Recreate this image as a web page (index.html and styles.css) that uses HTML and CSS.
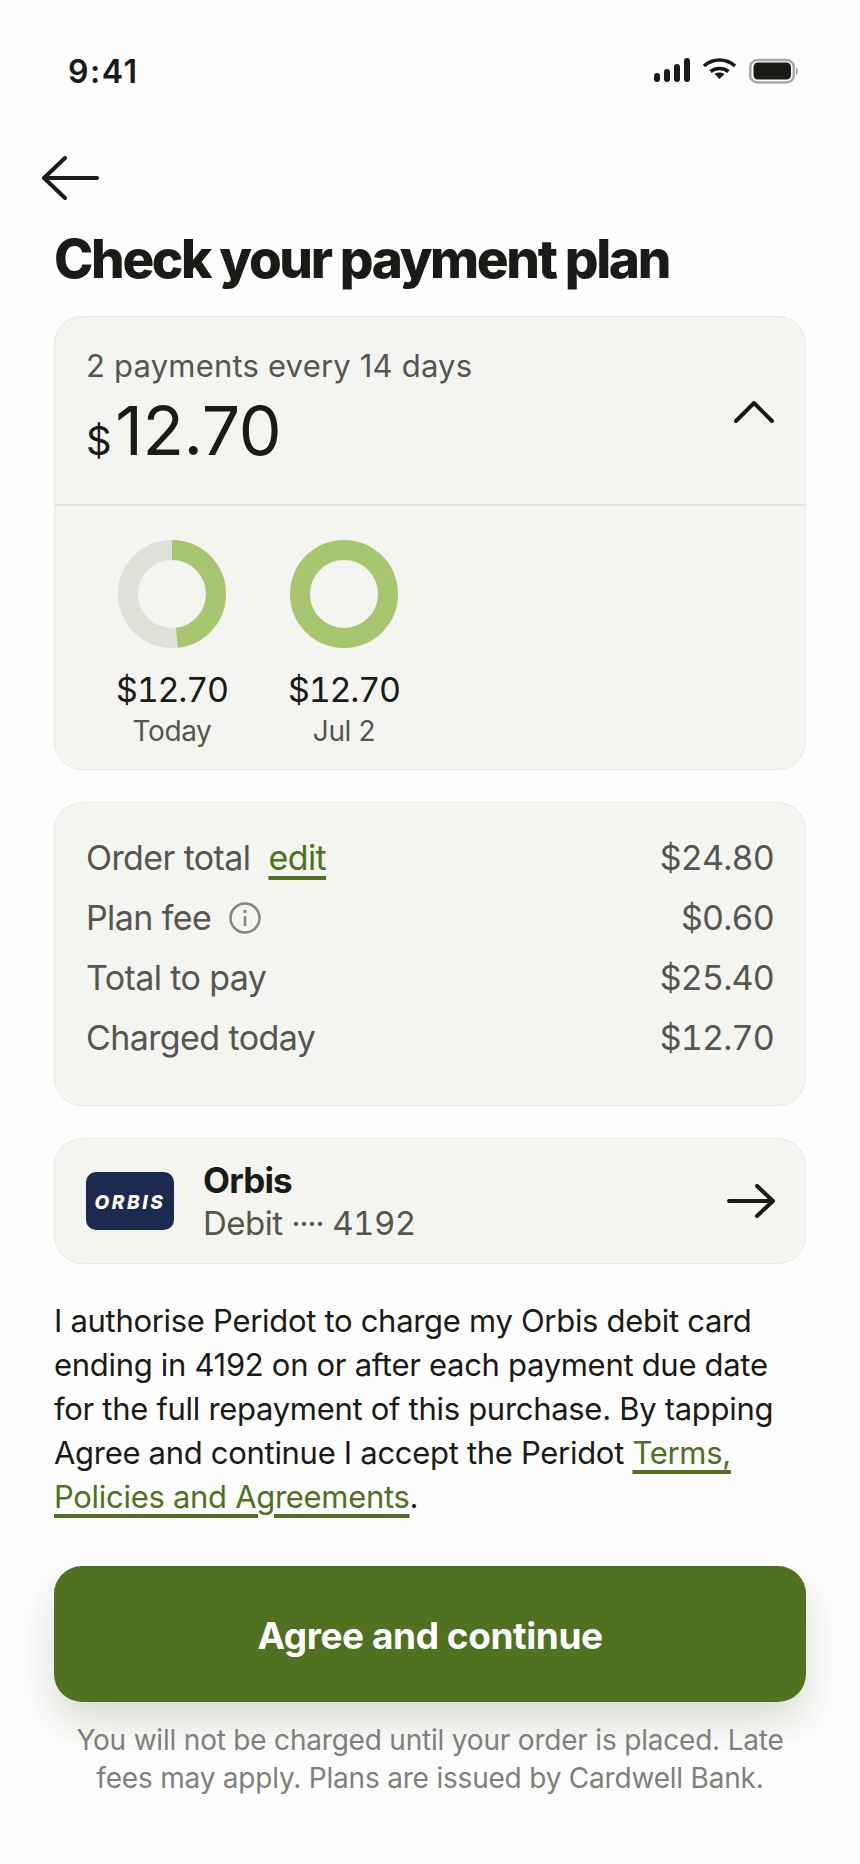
FILE: index.html
```html
<!DOCTYPE html>
<html lang="en">
<head>
    <meta charset="UTF-8">
    <meta name="viewport" content="width=device-width, initial-scale=1.0">
    <link rel="stylesheet" href="styles.css">
    <title>Check your payment plan</title>
</head>
<body>
    <div class="status-bar">
        <span class="status-bar__time">9:41</span>
        <svg class="status-bar__icons" width="146" height="28" viewBox="0 0 146 28">
            <g fill="#1a1a17">
                <rect x="0" y="16" width="6" height="9" rx="3"/>
                <rect x="10" y="12" width="6" height="13" rx="3"/>
                <rect x="20" y="7" width="6" height="18" rx="3"/>
                <rect x="30" y="1" width="6" height="24" rx="3"/>
                <path d="M60.5 17l5 5 5-5c-3-2-7-2-10 0z"/>
            </g>
            <g fill="none" stroke="#1a1a17" stroke-width="3.6">
                <path d="M50 9c9-8 22-8 31 0"/>
                <path d="M56.5 14.5c5-4 13-4 18 0"/>
            </g>
            <rect x="96.3" y="3" width="43.5" height="22.5" rx="7" fill="none" stroke="#a9a9a5" stroke-width="2.5"/>
            <rect x="99.5" y="5.500" width="37.500" height="17" rx="4.5" fill="#1a1a17"/>
            <path d="M142 10.5c2.5 1 2.5 6.5 0 7.500z" fill="#a9a9a5"/>
        </svg>
    </div>

    <main class="page">
        <svg class="back-icon" width="58" height="44" viewBox="0 0 58 44">
            <path d="M56 22H3M24 2L3 22l21 20" fill="none" stroke="#1a1a17" stroke-width="4" stroke-linecap="round" stroke-linejoin="round"/>
        </svg>

        <h1 class="title">Check your payment plan</h1>

        <section class="card">
            <div class="plan-head">
                <div>
                    <div class="plan-head__label">2 payments every 14 days</div>
                    <div class="plan-head__amount"><span class="plan-head__currency">$</span>12.70</div>
                </div>
                <svg class="plan-head__chevron" width="40" height="24" viewBox="0 0 40 24">
                    <path d="M2 21L20 3l18 18" fill="none" stroke="#1a1a17" stroke-width="4" stroke-linecap="round" stroke-linejoin="round"/>
                </svg>
            </div>
            <div class="plan-schedule">
                <div class="payment">
                    <svg width="108" height="108" viewBox="0 0 108 108">
                        <circle cx="54" cy="54" r="44" fill="none" stroke="#dfe0d8" stroke-width="20"/>
                        <circle cx="54" cy="54" r="44" fill="none" stroke="#a8c66f" stroke-width="20" stroke-dasharray="133 276.5" transform="rotate(-90 54 54)"/>
                    </svg>
                    <div class="payment__amount">$12.70</div>
                    <div class="payment__date">Today</div>
                </div>
                <div class="payment">
                    <svg width="108" height="108" viewBox="0 0 108 108">
                        <circle cx="54" cy="54" r="44" fill="none" stroke="#a8c66f" stroke-width="20"/>
                    </svg>
                    <div class="payment__amount">$12.70</div>
                    <div class="payment__date">Jul 2</div>
                </div>
            </div>
        </section>

        <section class="card summary">
            <div class="summary__row">
                <span class="summary__label">Order total <a class="link" href="#">edit</a></span>
                <span class="summary__value">$24.80</span>
            </div>
            <div class="summary__row">
                <span class="summary__label">Plan fee
                    <svg class="info-icon" width="32" height="32" viewBox="0 0 32 32">
                        <circle cx="16" cy="16" r="14.5" fill="none" stroke="#85857f" stroke-width="2.5"/>
                        <circle cx="16" cy="9.5" r="1.7" fill="#85857f"/>
                        <path d="M16 14v10" stroke="#85857f" stroke-width="2.5"/>
                    </svg>
                </span>
                <span class="summary__value">$0.60</span>
            </div>
            <div class="summary__row">
                <span class="summary__label">Total to pay</span>
                <span class="summary__value">$25.40</span>
            </div>
            <div class="summary__row">
                <span class="summary__label">Charged today</span>
                <span class="summary__value">$12.70</span>
            </div>
        </section>

        <section class="card method">
            <div class="method__logo">ORBIS</div>
            <div class="method__info">
                <div class="method__name">Orbis</div>
                <div class="method__detail">Debit <span class="method__dots">····</span> <span class="method__last4">4192</span></div>
            </div>
            <svg class="method__arrow" width="48" height="34" viewBox="0 0 48 34">
                <path d="M2 17h44M30 2l16 15-16 15" fill="none" stroke="#1a1a17" stroke-width="4" stroke-linecap="round" stroke-linejoin="round"/>
            </svg>
        </section>

        <p class="consent">I authorise Peridot to charge my Orbis debit card ending in 4192 on or after each payment due date for the full repayment of this purchase. By tapping Agree and continue I accept the Peridot <a class="link" href="#">Terms, Policies and Agreements</a>.</p>

        <button class="submit">Agree and continue</button>

        <p class="note">You will not be charged until your order is placed. Late fees may apply. Plans are issued by Cardwell Bank.</p>
    </main>
</body>
</html>
```

FILE: styles.css
```css
*{box-sizing: border-box; font-family: "Inter", "Liberation Sans", sans-serif;}

body{margin: 0; background: #fefefe; color: #1a1a17;}

.status-bar{display: flex; justify-content: space-between; align-items: center; height: 28px; margin-top: 57px; padding: 0 60px 0 68px;}
.status-bar__time{font-size: 32px; font-weight: 600; letter-spacing: 1.5px;}

.page{padding: 0 54px;}

.back-icon{display: block; margin: 71px 0 0 -13px;}

.title{margin: 27px 0 25px; font-size: 53px; line-height: 64px; font-weight: 800; letter-spacing: -2.35px;}

.card{background: #f4f5f0; border: 1.5px solid #e9eae4; border-radius: 28px; margin-bottom: 32px;}

.plan-head{display: flex; justify-content: space-between; align-items: flex-start; height: 189px; padding: 29px 31px 0; border-bottom: 2px solid #e4e5df;}
.plan-head__label{font-size: 31px; line-height: 40px; letter-spacing: 0.2px; color: #555650;}
.plan-head__amount{font-size: 68px; line-height: 76px; margin-top: 6px; letter-spacing: -0.4px;}
.plan-head__currency{font-size: 40px; margin-right: 4px;}
.plan-head__chevron{margin-top: 54px;}

.plan-schedule{display: flex; gap: 62px; padding: 34px 62px 20px;}
.payment{display: flex; flex-direction: column; align-items: center; width: 110px;}
.payment svg{display: block;}
.payment__amount{font-size: 34px; line-height: 40px; margin-top: 22px; letter-spacing: -1.2px; font-variant-numeric: tabular-nums; white-space: nowrap;}
.payment__date{font-size: 28px; line-height: 36px; margin-top: 3px; letter-spacing: -0.4px; color: #555650;}

.summary{padding: 25px 31px 37px 31px; font-size: 34px; line-height: 60px; color: #555650; margin-bottom: 32px;}
.summary__row{display: flex; justify-content: space-between; align-items: center;}
.summary__label{display: flex; align-items: center; gap: 18px; letter-spacing: -0.6px;}
.summary__value{letter-spacing: -0.8px; font-variant-numeric: tabular-nums;}

.link{color: #4f7120; text-decoration: underline; text-decoration-thickness: 4px; text-underline-offset: 6px;}
.info-icon{display: block;}

.method{display: flex; align-items: center; padding: 0 30px 0 31px; height: 126px; margin-bottom: 35px;}
.method__logo{display: flex; align-items: center; justify-content: center; width: 88px; height: 58px; padding-top: 3px; border-radius: 10px; background: #1b2a4e; color: #fff; font-size: 19px; font-weight: 800; font-style: italic; letter-spacing: 2.6px;}
.method__info{flex: 1; margin-left: 29px;}
.method__name{font-size: 35px; line-height: 44px; margin-top: -1px; font-weight: 700; letter-spacing: -0.8px;}
.method__detail{font-size: 33px; line-height: 40px; margin-top: 1px; letter-spacing: -0.5px; color: #555650;}
.method__dots{letter-spacing: -1.5px;}
.method__last4{font-variant-numeric: tabular-nums;}

.consent{margin: 0 0 47px; font-size: 31px; line-height: 44px; letter-spacing: -0.3px;}

.submit{display: block; width: 100%; height: 136px; padding-top: 3px; border: 0; border-radius: 28px; background: #4f7120; color: #fff; font-size: 37px; font-weight: 700; letter-spacing: -0.43px; box-shadow: 0 20px 40px rgba(60, 80, 30, 0.2);}

.note{margin: 19px 0 0; font-size: 28px; line-height: 38px; letter-spacing: -0.2px; text-align: center; color: #80807b;}
```
